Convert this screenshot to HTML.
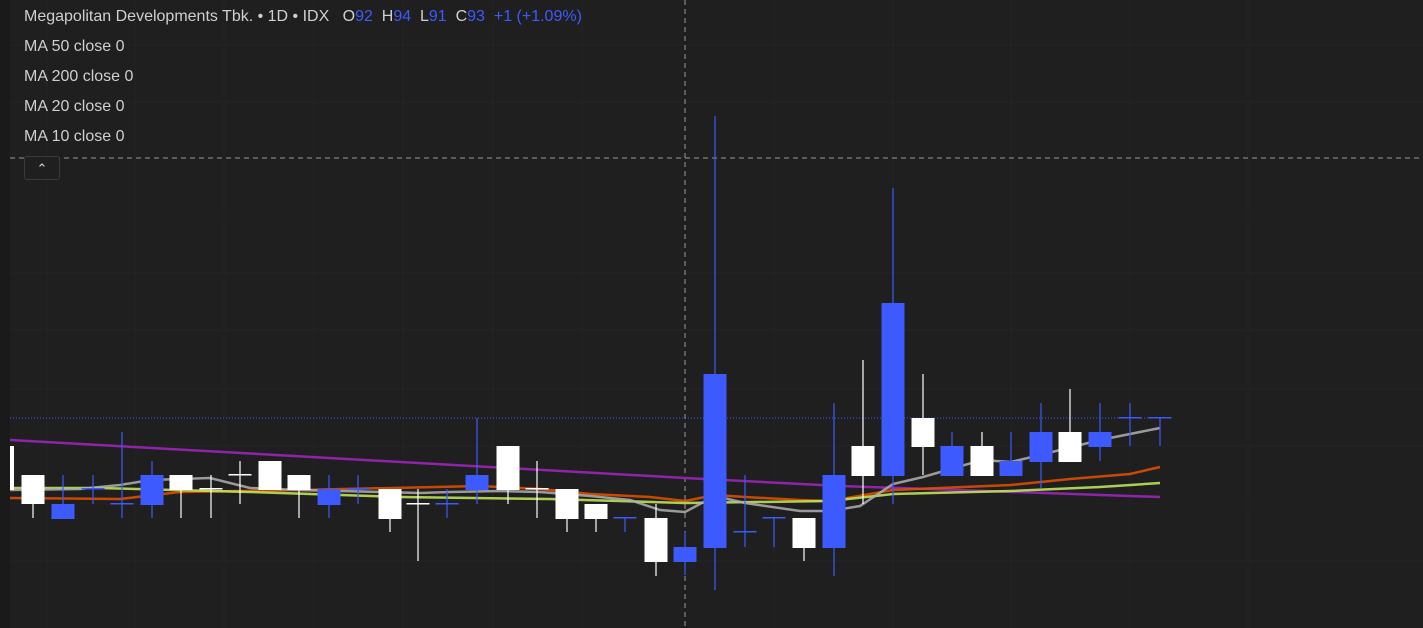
<!DOCTYPE html>
<html><head><style>
body{margin:0;width:1423px;height:628px;background:#1f1f1f;overflow:hidden;font-family:"Liberation Sans",sans-serif;position:relative}
.l{position:absolute;left:24px;color:#cfcfcf;font-size:16px}
.b{color:#3d5afe}
</style></head><body>
<svg width="1423" height="628" style="position:absolute;left:0;top:0">
<rect x="0" y="0" width="10" height="628" fill="#1a1a1a"/>
<g stroke="#232323" stroke-width="1">
<line x1="47" y1="0" x2="47" y2="628"/><line x1="135" y1="0" x2="135" y2="628"/><line x1="224" y1="0" x2="224" y2="628"/><line x1="314" y1="0" x2="314" y2="628"/><line x1="403" y1="0" x2="403" y2="628"/><line x1="493" y1="0" x2="493" y2="628"/><line x1="582" y1="0" x2="582" y2="628"/><line x1="774" y1="0" x2="774" y2="628"/><line x1="893" y1="0" x2="893" y2="628"/><line x1="1011" y1="0" x2="1011" y2="628"/><line x1="1130" y1="0" x2="1130" y2="628"/><line x1="1248" y1="0" x2="1248" y2="628"/>
<line x1="10" y1="45" x2="1423" y2="45"/><line x1="10" y1="102" x2="1423" y2="102"/><line x1="10" y1="216" x2="1423" y2="216"/><line x1="10" y1="273" x2="1423" y2="273"/><line x1="10" y1="330" x2="1423" y2="330"/><line x1="10" y1="389" x2="1423" y2="389"/><line x1="10" y1="446" x2="1423" y2="446"/><line x1="10" y1="504" x2="1423" y2="504"/><line x1="10" y1="561" x2="1423" y2="561"/>
</g>
<line x1="10" y1="418" x2="1170" y2="418" stroke="#3d5afe" stroke-dasharray="1 2"/>
<line x1="685" y1="0" x2="685" y2="628" stroke="#9a9a9a" stroke-dasharray="5 4"/>
<line x1="10" y1="158" x2="1423" y2="158" stroke="#9a9a9a" stroke-dasharray="5 4"/>
<polyline fill="none" stroke="#8e24aa" stroke-width="2.5" points="10,440 685,478 840,486 1160,497"/>
<polyline fill="none" stroke="#e65100" stroke-width="2.5" opacity="0.85" points="10,498 120,499 180,492 300,490 480,486 540,489 590,494 650,497 685,501 715,495 745,497 800,500 830,501 893,490 1011,485 1070,479 1130,474 1160,467"/>
<polyline fill="none" stroke="#c6ef5a" stroke-width="2.5" opacity="0.85" points="10,488 100,488 250,492 400,497 550,499 685,503 830,501 893,494 1011,491 1100,487 1160,483"/>
<polyline fill="none" stroke="#b0b0b0" stroke-width="2.5" opacity="0.85" points="10,490 80,489 120,485 150,480 180,479 210,478 250,488 300,490 340,491 420,493 450,492 500,491 540,492 590,496 630,500 660,510 685,512 715,496 745,503 800,511 830,511 860,506 893,484 923,477 982,460 1011,462 1040,455 1100,440 1160,428"/>
<g id="c"></g>
</svg>
<div class="l" style="top:8px">Megapolitan Developments Tbk. • 1D • IDX &nbsp; O<span class="b">92</span> &nbsp;H<span class="b">94</span> &nbsp;L<span class="b">91</span> &nbsp;C<span class="b">93</span> &nbsp;<span class="b">+1 (+1.09%)</span></div>
<div class="l" style="top:38px">MA 50 close 0</div>
<div class="l" style="top:68px">MA 200 close 0</div>
<div class="l" style="top:98px">MA 20 close 0</div>
<div class="l" style="top:128px">MA 10 close 0</div>
<div style="position:absolute;left:24px;top:156px;width:36px;height:24px;border:1px solid #3a3a3a;border-radius:3px;box-sizing:border-box;background:#1f1f1f;color:#ddd;font-size:13px;text-align:center;line-height:24px">&#8963;</div>
<script>
var d=[[33,'w',475,504,475,518],[63,'b',504,519,475,519],[93,'b',489,489,475,504],[122,'b',504,504,432,518],[152,'b',475,505,461,518],[181,'w',475,490,475,518],[211,'w',489,489,475,518],[240,'w',475,475,461,504],[270,'w',461,490,461,490],[299,'w',475,490,475,518],[329,'b',489,505,475,518],[358,'b',489,489,475,504],[390,'w',489,519,489,532],[418,'w',504,504,489,561],[447,'b',504,504,489,518],[477,'b',475,490,418,504],[508,'w',446,490,446,504],[537,'w',489,489,461,518],[567,'w',489,519,489,532],[596,'w',504,519,504,532],[625,'b',518,518,518,532],[656,'w',518,562,504,576],[685,'b',547,562,532,575],[715,'b',374,548,116,590],[745,'b',532,532,475,547],[774,'b',518,518,518,547],[804,'w',518,548,518,561],[834,'b',475,548,403,576],[863,'w',446,476,360,504],[893,'b',303,476,188,504],[923,'w',418,447,374,475],[952,'b',446,476,432,476],[982,'w',446,476,432,476],[1011,'b',461,476,432,476],[1041,'b',432,462,403,488],[1070,'w',432,462,389,462],[1100,'b',432,447,403,461],[1130,'b',418,418,403,446],[1160,'b',418,418,418,446]];
var s='<rect x="10" y="446" width="4" height="44" fill="#fff"/>';
d.forEach(function(c){var col=c[1]=='w'?'#fff':'#3d5afe';s+='<line x1="'+c[0]+'" x2="'+c[0]+'" y1="'+c[4]+'" y2="'+c[5]+'" stroke="'+col+'" stroke-width="1.2"/>';var h=c[3]-c[2];if(h<2)s+='<rect x="'+(c[0]-11.5)+'" y="'+(c[2]-1)+'" width="23" height="1.5" fill="'+col+'"/>';else s+='<rect x="'+(c[0]-11.5)+'" y="'+c[2]+'" width="23" height="'+h+'" fill="'+col+'"/>';});
document.getElementById('c').innerHTML=s;
</script>
</body></html>
